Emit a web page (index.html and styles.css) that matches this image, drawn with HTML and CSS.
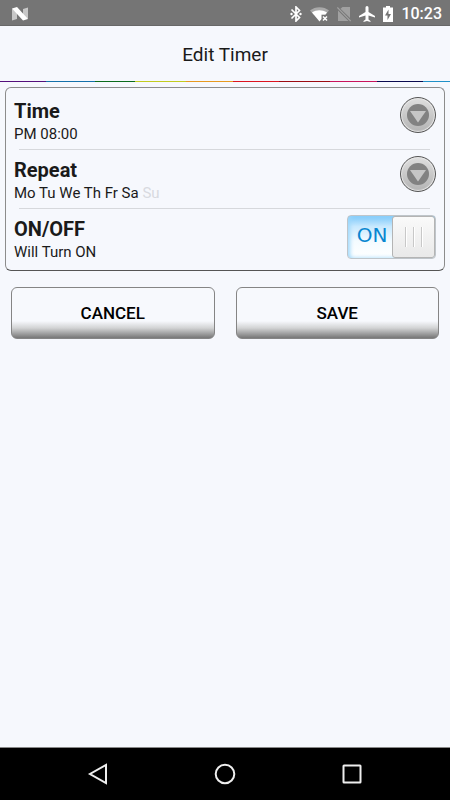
FILE: index.html
```html
<!DOCTYPE html>
<html lang="en">
<head>
<meta charset="utf-8">
<meta name="viewport" content="width=device-width, initial-scale=1">
<title>Edit Timer</title>
<link rel="stylesheet" href="styles.css">
</head>
<body>
<div class="status-bar">
  <svg class="app-mark" width="16" height="14" viewBox="0 0 16 14" aria-hidden="true">
    <path fill="#c8c8c8" d="M0 1.500 5 5v7L0 13.500zM16 .5 11 2v7l5 3z"/>
    <path fill="#fff" d="M0 1.500 5 0l11 12-5 1.500z"/>
  </svg>
  <div class="status-icons">
    <svg width="12" height="16" viewBox="0 0 12 16" aria-hidden="true">
      <path fill="none" stroke="#fff" stroke-width="1.700" d="M1.500 3.500 9.500 11.500 6 15V1l3.500 3.500L1.500 12.500"/>
      <circle cx="1.500" cy="8" r="1.200" fill="#fff"/><circle cx="10.500" cy="8" r="1.200" fill="#fff"/>
    </svg>
    <svg width="19" height="16" viewBox="0 0 19 16" aria-hidden="true">
      <path fill="#a9a9a9" d="M0 4.500C5 0 14 0 19 4.500l-4 4.500H4z"/>
      <path fill="#fff" d="M2 6.500C6.500 3.500 12 3.500 17 6.500L15.500 8.500H11.500v4.500L9.500 15.500z"/>
      <path fill="none" stroke="#fff" stroke-width="1.500" d="m13 10.500 4 4m0-4-4 4"/>
    </svg>
    <svg width="14" height="16" viewBox="0 0 14 16" aria-hidden="true">
      <path fill="#a0a0a0" d="M5.500 1H13v11L3.500 2.800zM1 4.500 11.500 15H1z"/>
      <path stroke="#a0a0a0" stroke-width="1.300" d="m.3 1.500 13.400 13.500"/>
    </svg>
    <svg width="16" height="16" viewBox="0 0 16 16" aria-hidden="true">
      <path fill="#fff" d="M16 11.500V10L9.500 6V1.500a1.500 1.500 0 0 0-3 0V6L0 10v1.500l6.500-2v4L4.500 15v1L8 15l3.500 1v-1l-2-1.500v-4z"/>
    </svg>
    <svg width="10" height="16" viewBox="0 0 10 16" aria-hidden="true">
      <path fill="#fff" d="M3 0h4v1.500h3V16H0V1.500h3z"/>
      <path fill="#757575" d="M5.500 3.500 2 9.500h2.500V14L8 8H5.500z"/>
    </svg>
    <span class="clock">10:23</span>
  </div>
</div>
<header class="title-bar"><h1>Edit Timer</h1></header>
<div class="rainbow"></div>
<main>
  <form>
    <section class="card">
      <div class="row">
        <div class="row-text">
          <h2 id="time-label">Time</h2>
          <p>PM 08:00</p>
        </div>
        <button type="button" class="dropdown" aria-labelledby="time-label">
          <svg width="22" height="22" viewBox="0 0 22 22" aria-hidden="true"><circle cx="11" cy="11" r="11" fill="#828282"/><path fill="#c6c6c6" d="M3 7h16l-8 11.500z"/></svg>
        </button>
      </div>
      <div class="row">
        <div class="row-text">
          <h2 id="repeat-label">Repeat</h2>
          <p>Mo Tu We Th Fr Sa <span class="day-off">Su</span></p>
        </div>
        <button type="button" class="dropdown" aria-labelledby="repeat-label">
          <svg width="22" height="22" viewBox="0 0 22 22" aria-hidden="true"><circle cx="11" cy="11" r="11" fill="#828282"/><path fill="#c6c6c6" d="M3 7h16l-8 11.500z"/></svg>
        </button>
      </div>
      <div class="row">
        <div class="row-text">
          <h2><label for="power">ON/OFF</label></h2>
          <p>Will Turn ON</p>
        </div>
        <label class="switch">
          <input id="power" type="checkbox" role="switch" checked>
          <span class="switch-text">ON</span>
          <span class="switch-thumb"><i></i><i></i><i></i></span>
        </label>
      </div>
    </section>
    <div class="actions">
      <button type="button" class="action">CANCEL</button>
      <button type="button" class="action">SAVE</button>
    </div>
  </form>
</main>
<nav class="nav-bar">
  <button type="button" aria-label="Back"><svg width="22" height="22" viewBox="0 0 22 22" aria-hidden="true"><path d="M19 2v18L3 11z"/></svg></button>
  <button type="button" aria-label="Home"><svg width="22" height="22" viewBox="0 0 22 22" aria-hidden="true"><circle cx="11" cy="11" r="9.300"/></svg></button>
  <button type="button" aria-label="Recent apps"><svg width="22" height="22" viewBox="0 0 22 22" aria-hidden="true"><rect x="2.500" y="2.500" width="17" height="17" rx=".5"/></svg></button>
</nav>
</body>
</html>
```
FILE: styles.css
```css
* {
  box-sizing: border-box;
}

body {
  display: flex;
  flex-direction: column;
  min-height: 100vh;
  margin: 0;
  background: #f6f8fd;
  color: #1a1a1a;
  font-family: Roboto, "Liberation Sans", sans-serif;
}

h1,
h2,
p {
  margin: 0;
}

button {
  padding: 0;
  font-family: inherit;
}

.status-bar {
  display: flex;
  align-items: center;
  justify-content: space-between;
  height: 26px;
  padding: 2px 8px 0 12px;
  border-bottom: 1px solid #686868;
  background: #757575;
}

.status-icons {
  display: flex;
  align-items: center;
  gap: 8px;
}

.clock {
  color: #fff;
  font-size: 16px;
  font-weight: 500;
  line-height: 22px;
}

.title-bar {
  padding: 17px 0 14px;
  text-align: center;
}

h1 {
  font-size: 19px;
  font-weight: 400;
  line-height: 24px;
}

.rainbow {
  height: 1px;
  background: linear-gradient(90deg,
    #54107c 0 10.2%, #1470aa 0 21.1%, #0b6b1c 0 30%, #c2cc20 0 41.3%,
    #e79a20 0 51.8%, #dc1420 0 62%, #9c0b12 0 73.3%, #c8145c 0 83.8%,
    #0a0a50 0 94%, #2090c8 0);
}

main {
  flex: 1;
  padding: 5px;
}

.card {
  padding: 3px 8px 2px;
  border: 1px solid #8c8c8c;
  border-bottom-color: #555;
  border-radius: 6px;
}

.row {
  display: flex;
  align-items: flex-start;
  justify-content: space-between;
  height: 59px;
  padding-top: 6px;
}

.row:not(:last-child) {
  background: linear-gradient(#d6d8dc, #d6d8dc) 5px 100% / calc(100% - 11px) 1px no-repeat;
}

.row-text {
  padding-top: 2px;
}

h2 {
  font-size: 20px;
  font-weight: 700;
  line-height: 24px;
}

.row p {
  font-size: 15px;
  line-height: 22px;
}

.row .day-off {
  color: #d8dae0;
}

.dropdown {
  display: grid;
  place-items: center;
  width: 36px;
  height: 36px;
  border: 1px solid #555;
  border-radius: 50%;
  background: linear-gradient(#dedede, #b4b4b4);
  box-shadow: inset 0 0 1px 1px #e8e8e8;
}

.switch {
  display: flex;
  position: relative;
  width: 89px;
  height: 44px;
  border: 1px solid #bfc5ca;
  border-radius: 4px;
  background: linear-gradient(#7cc8fa, #c8e9fe 25%, #f4fbff 60%, #fff);
  box-shadow: inset 2px 0 4px #9cd7fb;
}

.switch input {
  position: absolute;
  inset: 0;
  width: 100%;
  height: 100%;
  margin: 0;
  opacity: 0;
}

.switch-text {
  flex: 1;
  padding-left: 4px;
  color: #0886d0;
  font-family: "DejaVu Sans", sans-serif;
  font-size: 20px;
  line-height: 38px;
  text-align: center;
}

.switch-thumb {
  display: flex;
  align-items: center;
  justify-content: center;
  gap: 6px;
  width: 43px;
  border: 1px solid #b4b4b4;
  border-radius: 3px;
  background: linear-gradient(#fafafa, #e9e9e9);
}

.switch-thumb i {
  width: 2px;
  height: 20px;
  border-left: 1px solid #c8c8c8;
  border-right: 1px solid #fff;
}

.actions {
  display: grid;
  grid-template-columns: 1fr 1fr;
  gap: 21px;
  padding: 16px 6px;
}

.action {
  height: 52px;
  border: 1px solid #858585;
  border-radius: 6px;
  background: linear-gradient(#f7f9fd 66%, #d2d3d4 80%, #777);
  color: #000;
  font-size: 17px;
  font-weight: 500;
}

.nav-bar {
  display: flex;
  justify-content: center;
  gap: 105px;
  padding: 15px 0;
  border-top: 1px solid #888;
  background: #000;
}

.nav-bar button {
  width: 22px;
  height: 22px;
  border: 0;
  background: none;
}

.nav-bar svg {
  display: block;
  fill: none;
  stroke: #eee;
  stroke-width: 2;
}
```
